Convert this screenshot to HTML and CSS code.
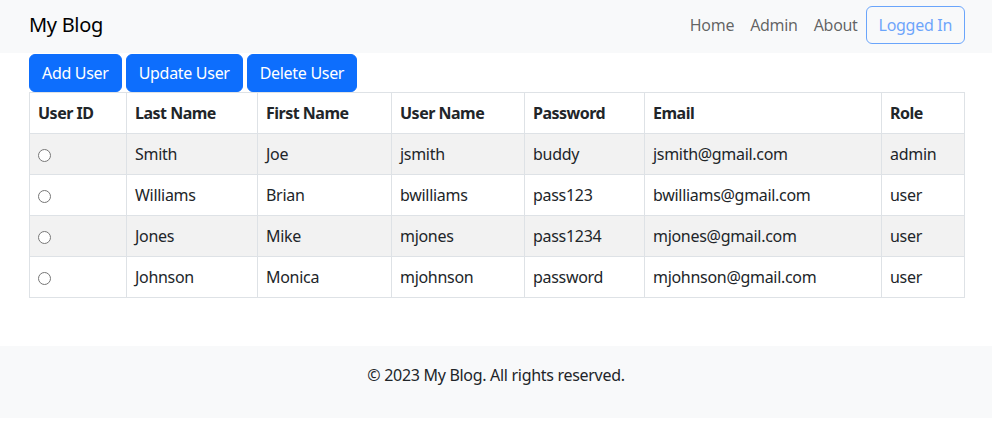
FILE: index.html
```html
<!DOCTYPE html>
<html lang="en">
<head>
<meta charset="utf-8">
<title>My Blog - Admin</title>
<link rel="stylesheet" href="styles.css">
</head>
<body>
<nav class="navbar">
  <a class="brand" href="#">My Blog</a>
  <div class="nav-links">
    <a class="nav-link" href="#">Home</a>
    <a class="nav-link" href="#">Admin</a>
    <a class="nav-link" href="#">About</a>
    <button class="btn-logged" disabled>Logged In</button>
  </div>
</nav>
<main class="content">
  <div class="actions">
    <button class="btn-primary">Add User</button>
    <button class="btn-primary">Update User</button>
    <button class="btn-primary">Delete User</button>
  </div>
  <table class="users">
    <colgroup>
      <col class="c-id"><col class="c-last"><col class="c-first"><col class="c-user"><col class="c-pass"><col class="c-email"><col class="c-role">
    </colgroup>
    <thead>
      <tr><th>User ID</th><th>Last Name</th><th>First Name</th><th>User Name</th><th>Password</th><th>Email</th><th>Role</th></tr>
    </thead>
    <tbody>
      <tr><td><input type="radio" name="sel"></td><td>Smith</td><td>Joe</td><td>jsmith</td><td>buddy</td><td>jsmith@gmail.com</td><td>admin</td></tr>
      <tr><td><input type="radio" name="sel"></td><td>Williams</td><td>Brian</td><td>bwilliams</td><td>pass123</td><td>bwilliams@gmail.com</td><td>user</td></tr>
      <tr><td><input type="radio" name="sel"></td><td>Jones</td><td>Mike</td><td>mjones</td><td>pass1234</td><td>mjones@gmail.com</td><td>user</td></tr>
      <tr><td><input type="radio" name="sel"></td><td>Johnson</td><td>Monica</td><td>mjohnson</td><td>password</td><td>mjohnson@gmail.com</td><td>user</td></tr>
    </tbody>
  </table>
</main>
<footer class="footer">© 2023 My Blog. All rights reserved.</footer>
</body>
</html>
```
FILE: styles.css
```css
* { box-sizing: border-box; }
html, body { margin: 0; padding: 0; }
body {
  font-family: "Noto Sans", "DejaVu Sans", sans-serif;
  font-size: 16px;
  line-height: 1.5;
  letter-spacing: -0.3px;
  color: #212529;
  background: #fff;
}
.navbar {
  height: 53px;
  background: #f8f9fa;
  display: flex;
  align-items: center;
  justify-content: space-between;
  padding: 0 27px 3px 29px;
}
.brand {
  font-size: 20px;
  color: #000;
  text-decoration: none;
  line-height: 1;
}
.nav-links {
  display: flex;
  align-items: center;
}
.nav-link {
  color: rgba(0, 0, 0, 0.62);
  text-decoration: none;
  padding: 8px 8px;
}
.btn-logged {
  font: inherit;
  letter-spacing: inherit;
  color: #0d6efd;
  background: transparent;
  border: 1px solid #0d6efd;
  border-radius: 6px;
  padding: 6px 12px;
  height: 38px;
  opacity: 0.6;
}
.content {
  padding: 0 27px 0 29px;
}
.actions {
  display: flex;
  gap: 4px;
  height: 38px;
  margin-top: 1px;
}
.btn-primary {
  font: inherit;
  letter-spacing: inherit;
  color: #fff;
  background: #0d6efd;
  border: 1px solid #0d6efd;
  border-radius: 6px;
  padding: 6px 12px;
  height: 38px;
  line-height: 24px;
}
.users {
  width: 935px;
  border-collapse: collapse;
  table-layout: fixed;
}
.c-id { width: 97px; }
.c-last { width: 131px; }
.c-first { width: 134px; }
.c-user { width: 133px; }
.c-pass { width: 120px; }
.c-email { width: 237px; }
.c-role { width: 83px; }
.users th, .users td {
  border: 1px solid #dee2e6;
  padding: 8px;
  height: 41px;
  text-align: left;
  vertical-align: middle;
  white-space: nowrap;
}
.users th { font-weight: 700; letter-spacing: -0.5px; }
.users tbody tr:nth-child(odd) td { background: #f2f2f2; }
.users input[type="radio"] {
  margin: 0;
  width: 13px;
  height: 13px;
  vertical-align: middle;
}
.footer {
  margin-top: 48px;
  background: #f8f9fa;
  height: 72px;
  display: flex;
  align-items: flex-start;
  justify-content: center;
  padding-top: 17px;
}
```
